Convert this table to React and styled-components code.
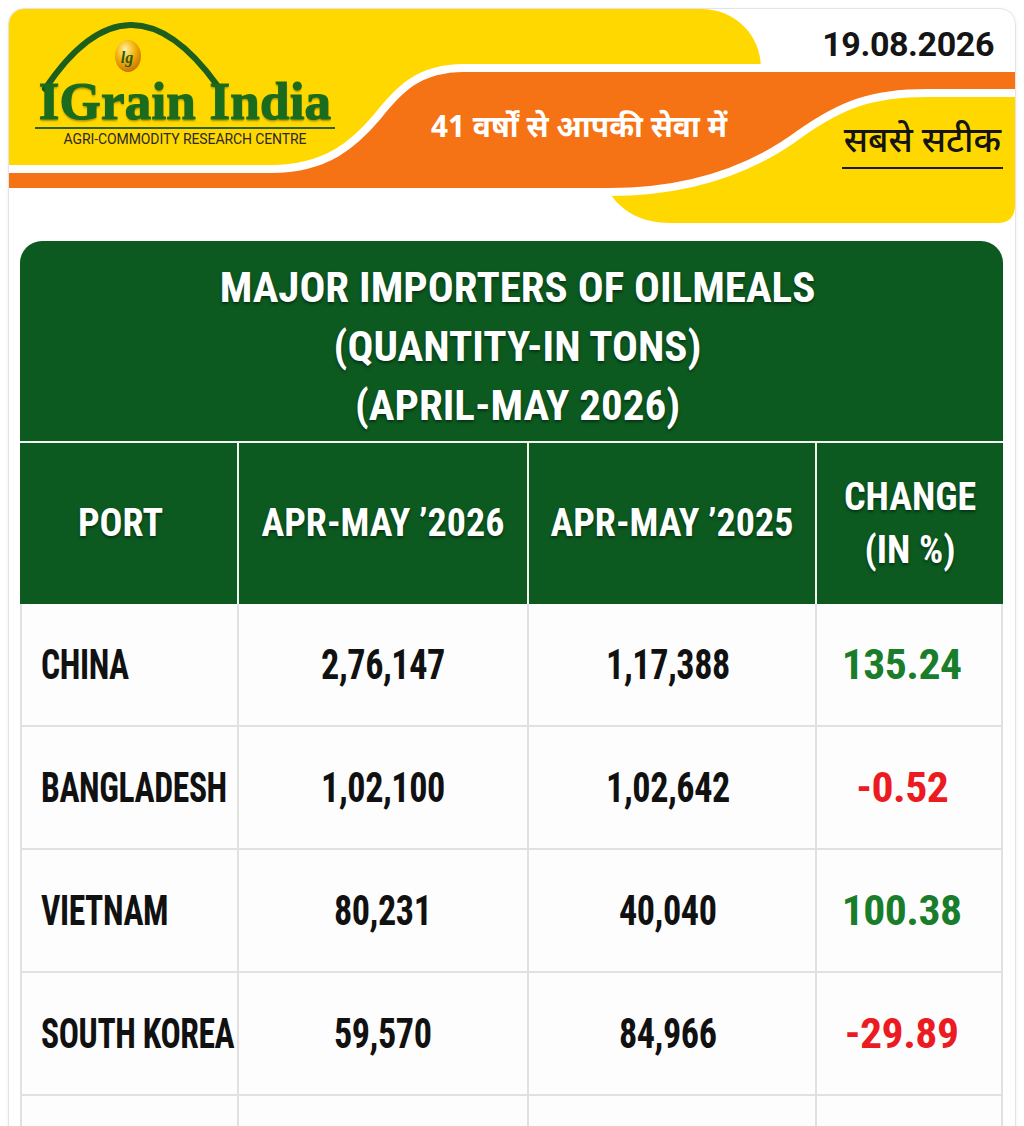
import React from 'react';
import styled, { createGlobalStyle } from 'styled-components';

const GlobalStyle = createGlobalStyle`
  html, body {
    margin: 0;
    padding: 0;
    background: #ffffff;
  }
  body {
    font-family: Roboto, "Liberation Sans", sans-serif;
  }
`;

const COND = `"Roboto Condensed", "Liberation Sans Narrow", "DejaVu Sans Condensed", Roboto, sans-serif`;
const HINDI = `"Noto Sans Devanagari", "Lohit Devanagari", "Mukta", "FreeSans", "Noto Sans", sans-serif`;

const Page = styled.div`
  padding: 8px 8px 0;
  height: 1126px;
  box-sizing: border-box;
  overflow: hidden;
`;

const Sheet = styled.div`
  background: #ffffff;
  border: 1px solid #e4e4e4;
  border-radius: 16px;
  overflow: hidden;
  height: 1200px;
  box-shadow: 0 1px 4px rgba(0, 0, 0, 0.06);
`;

const Header = styled.header`
  position: relative;
  height: 214px;
`;

const Backdrop = styled.svg`
  position: absolute;
  inset: 0;
  width: 100%;
  height: 100%;
`;

const HeaderGrid = styled.div`
  position: relative;
  display: grid;
  grid-template-columns: 300px 1fr auto;
  height: 100%;
  padding: 8px 12px 0 26px;
  box-sizing: border-box;
`;

const Logo = styled.div`
  display: flex;
  flex-direction: column;
  align-items: stretch;
`;

const ArcArt = styled.svg`
  display: block;
  overflow: visible;
`;

const Brand = styled.div`
  margin-top: -4px;
  font-family: "Liberation Serif", "DejaVu Serif", serif;
  font-weight: 700;
  font-size: 53px;
  line-height: 44px;
  color: #1b6b1e;
  -webkit-text-stroke: 1.2px #1b6b1e;
  text-align: center;
  letter-spacing: 0.2px;
  text-shadow: 0 2px 2px rgba(0, 0, 0, 0.35);
  white-space: nowrap;
`;

const BrandRule = styled.div`
  height: 2px;
  background: #2f5f1f;
  margin-top: 4px;
`;

const BrandSub = styled.div`
  margin-top: 2px;
  font-family: Roboto, "Liberation Sans", sans-serif;
  font-size: 14px;
  line-height: 16px;
  color: #2a2a2a;
  text-align: center;
  letter-spacing: -0.1px;
`;

const Tagline = styled.div`
  align-self: start;
  margin: 93px 0 0 96px;
  font-family: ${HINDI};
  font-weight: 700;
  font-size: 30px;
  line-height: 40px;
  color: #ffffff;
  white-space: nowrap;
`;

const Side = styled.div`
  display: flex;
  flex-direction: column;
  align-items: flex-end;
`;

const DateText = styled.div`
  margin: 7px 9px 0 0;
  font-family: Roboto, "Liberation Sans", sans-serif;
  font-weight: 700;
  font-size: 34px;
  line-height: 40px;
  letter-spacing: -0.4px;
  color: #151515;
`;

const Motto = styled.div`
  margin-top: 60px;
  padding: 0 2px 3px;
  border-bottom: 2px solid #1a1a1a;
  font-family: ${HINDI};
  font-weight: 500;
  font-size: 35px;
  line-height: 40px;
  color: #141414;
  white-space: nowrap;
`;

const TableCard = styled.section`
  margin: 18px 12px 0 11px;
  border-radius: 22px 22px 0 0;
  overflow: hidden;
  font-family: ${COND};
  font-weight: 700;
`;

const Title = styled.h1`
  margin: 0;
  padding: 17px 0 6px 12px;
  background: #0c5a20;
  color: #ffffff;
  text-align: center;
  font-size: 43px;
  line-height: 59px;
  font-weight: 700;
  text-shadow: 0 2px 3px rgba(0, 0, 0, 0.45);
`;

const Row = styled.div`
  display: grid;
  grid-template-columns: ${(p) => (p.$head ? '217px 288px 286px 1fr' : '215px 288px 286px 1fr')};
  column-gap: 2px;
  height: ${(p) => (p.$head ? '161px' : '121px')};
  background: ${(p) => (p.$head ? '#f2f5f2' : '#e1e1e1')};
  border-top: ${(p) => (p.$head ? '2px solid #f2f5f2' : '0')};
  border-bottom: ${(p) => (p.$head ? '0' : '2px solid #e1e1e1')};
  border-left: ${(p) => (p.$head ? '0' : '2px solid #e1e1e1')};
  border-right: ${(p) => (p.$head ? '0' : '2px solid #e1e1e1')};
`;

const HeadCell = styled.div`
  display: flex;
  align-items: center;
  justify-content: center;
  padding-right: ${(p) => (p.$nudge ? '16px' : '0')};
  text-align: center;
  background: #0c5a20;
  color: #ffffff;
  font-size: 38px;
  line-height: 53px;
  text-shadow: 0 2px 3px rgba(0, 0, 0, 0.45);
`;

const Cell = styled.div`
  display: flex;
  align-items: center;
  justify-content: ${(p) => (p.$left ? 'flex-start' : 'center')};
  padding-left: ${(p) => (p.$left ? '19px' : '0')};
  padding-right: ${(p) => p.$shift || 0}px;
  background: #fdfdfd;
  color: ${(p) => p.$tone || '#111111'};
  white-space: nowrap;
  min-width: 0;
`;

// the reference face is a tall, tight grotesque; squeeze Roboto Condensed to match
const Figure = styled.span`
  display: inline-block;
  font-size: 42px;
  line-height: 48px;
  letter-spacing: -0.5px;
  transform: scaleX(${(p) => p.$squeeze || 1});
  transform-origin: ${(p) => (p.$left ? 'left center' : 'center center')};
`;

const rows = [
  { port: 'CHINA', y26: '2,76,147', y25: '1,17,388', change: '135.24' },
  { port: 'BANGLADESH', y26: '1,02,100', y25: '1,02,642', change: '-0.52' },
  { port: 'VIETNAM', y26: '80,231', y25: '40,040', change: '100.38' },
  { port: 'SOUTH KOREA', y26: '59,570', y25: '84,966', change: '-29.89' },
  { port: '', y26: '', y25: '', change: '' },
];

const toneFor = (value) => {
  if (!value) return undefined;
  return value.startsWith('-') ? '#ec1b22' : '#1a7d2b';
};

function HeaderArt() {
  return (
    <Backdrop viewBox="0 0 1006 214" preserveAspectRatio="none">
      <path
        d="M0,160 L262,160 C318,160 346,134 368,108 C390,80 410,59 455,59 L1006,59 L1006,84 L918,84 C862,84 832,96 792,124 C744,160 682,183 600,183 L0,183 Z"
        fill="#f57314"
      />
      <path
        d="M0,0 L692,0 C726,0 752,26 752,59 L455,59 C410,59 390,80 368,108 C346,134 318,160 262,160 L0,160 Z"
        fill="#ffd800"
      />
      <path
        d="M600,183 C682,183 744,160 792,124 C832,96 862,84 918,84 L1006,84 L1006,196 Q1006,214 988,214 L662,214 C632,214 612,202 600,183 Z"
        fill="#ffd800"
      />
      <path
        d="M0,160 L262,160 C318,160 346,134 368,108 C390,80 410,59 455,59 L1006,59"
        fill="none"
        stroke="#ffffff"
        strokeWidth="8"
      />
      <path
        d="M0,183 L600,183 C682,183 744,160 792,124 C832,96 862,84 918,84 L1006,84"
        fill="none"
        stroke="#ffffff"
        strokeWidth="8"
      />
    </Backdrop>
  );
}

function LogoMark() {
  return (
    <ArcArt width="300" height="66" viewBox="0 0 300 66">
      <defs>
        <radialGradient id="ball" cx="40%" cy="30%" r="75%">
          <stop offset="0%" stopColor="#fff2a8" />
          <stop offset="45%" stopColor="#f7b70f" />
          <stop offset="100%" stopColor="#c46d00" />
        </radialGradient>
      </defs>
      <path d="M10,72 Q94,-54 182,68" fill="none" stroke="#1d5e1d" strokeWidth="6" strokeLinecap="round" />
      <ellipse cx="93" cy="39" rx="13" ry="16" fill="url(#ball)" />
      <text x="92" y="46" textAnchor="middle" fontFamily="Liberation Serif, serif" fontStyle="italic" fontWeight="700" fontSize="16" fill="#2d5a14">
        lg
      </text>
    </ArcArt>
  );
}

export default function App() {
  return (
    <>
      <GlobalStyle />
      <Page>
        <Sheet>
          <Header>
            <HeaderArt />
            <HeaderGrid>
              <Logo>
                <LogoMark />
                <Brand>IGrain India</Brand>
                <BrandRule />
                <BrandSub>AGRI-COMMODITY RESEARCH CENTRE</BrandSub>
              </Logo>
              <Tagline>41 वर्षों से आपकी सेवा में</Tagline>
              <Side>
                <DateText>19.08.2026</DateText>
                <Motto>सबसे सटीक</Motto>
              </Side>
            </HeaderGrid>
          </Header>

          <TableCard>
            <Title>
              MAJOR IMPORTERS OF OILMEALS
              <br />
              (QUANTITY-IN TONS)
              <br />
              (APRIL-MAY 2026)
            </Title>
            <Row $head>
              <HeadCell $nudge>PORT</HeadCell>
              <HeadCell>APR-MAY ’2026</HeadCell>
              <HeadCell>APR-MAY ’2025</HeadCell>
              <HeadCell>
                CHANGE
                <br />
                (IN %)
              </HeadCell>
            </Row>
            {rows.map((r, i) => (
              <Row key={i}>
                <Cell $left>
                  <Figure $left $squeeze={0.8}>{r.port}</Figure>
                </Cell>
                <Cell>
                  <Figure $squeeze={0.86}>{r.y26}</Figure>
                </Cell>
                <Cell $shift={8}>
                  <Figure $squeeze={0.86}>{r.y25}</Figure>
                </Cell>
                <Cell $shift={14} $tone={toneFor(r.change)}>
                  <Figure $squeeze={1.04}>{r.change}</Figure>
                </Cell>
              </Row>
            ))}
          </TableCard>
        </Sheet>
      </Page>
    </>
  );
}
